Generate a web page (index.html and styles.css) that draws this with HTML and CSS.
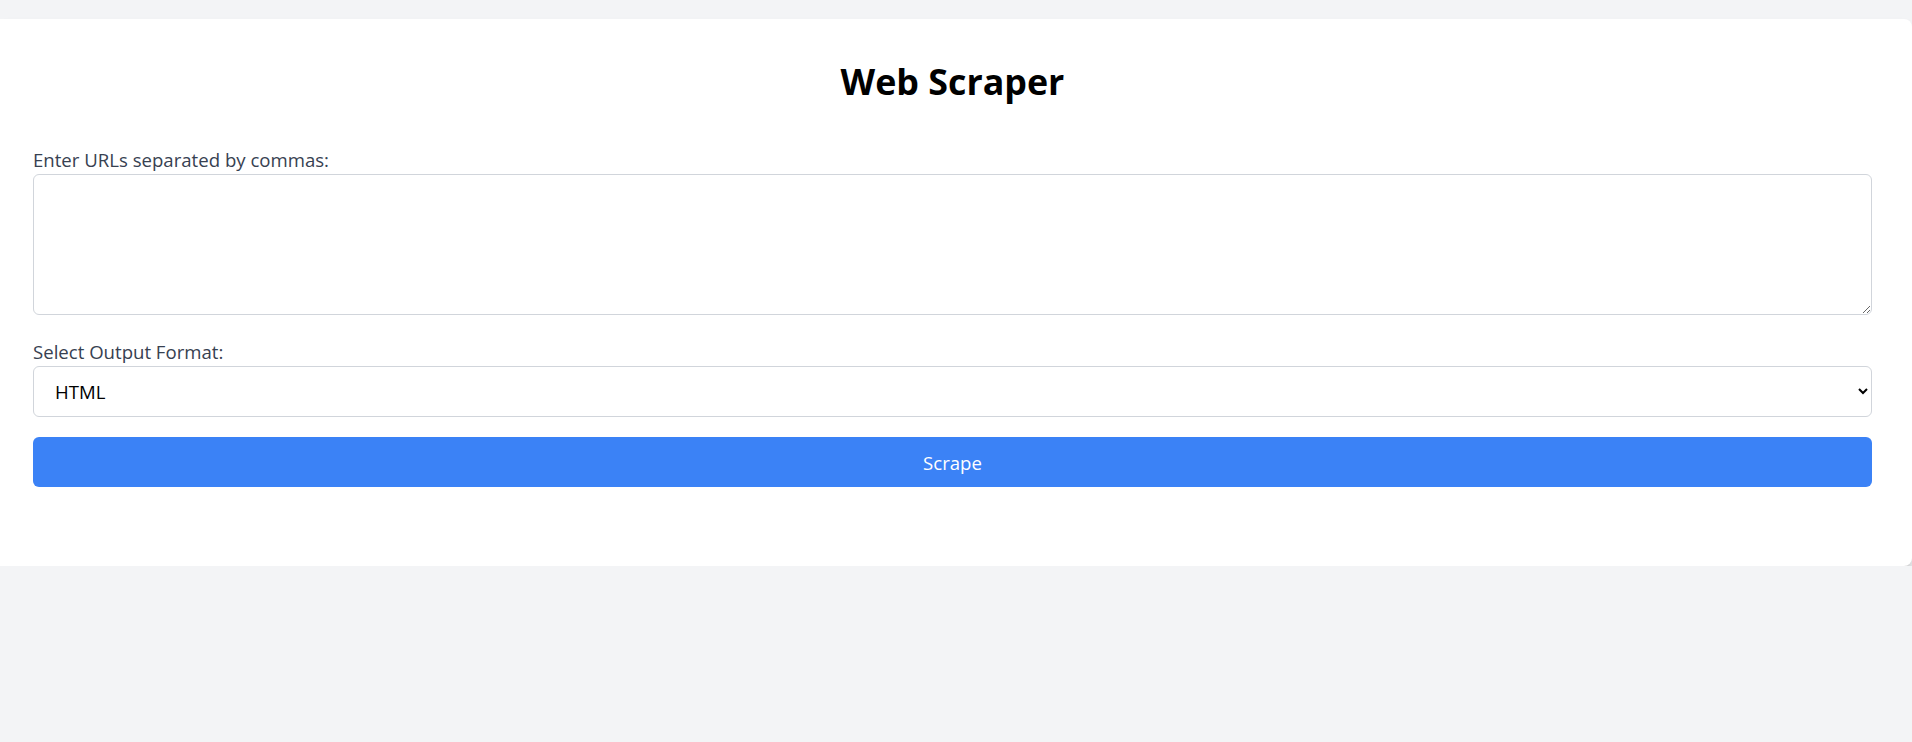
FILE: index.html
```html
<!DOCTYPE html>
<html lang="en">
<head>
<meta charset="utf-8">
<title>Web Scraper</title>
<link rel="stylesheet" href="styles.css">
</head>
<body>
<main class="card">
  <h1 class="title">Web Scraper</h1>
  <form class="form">
    <label class="label" for="urls">Enter URLs separated by commas:</label>
    <textarea id="urls" class="textarea"></textarea>
    <label class="label label-select" for="format">Select Output Format:</label>
    <select id="format" class="select">
      <option>HTML</option>
      <option>JSON</option>
      <option>CSV</option>
    </select>
    <button type="button" class="button">Scrape</button>
  </form>
</main>
</body>
</html>
```
FILE: styles.css
```css
html, body {
  margin: 0;
  padding: 0;
}
html {
  background: #f3f4f6;
}
body {
  font-family: "Open Sans", "Noto Sans", "Liberation Sans", sans-serif;
  padding-top: 19px;
}
.card {
  position: relative;
  box-sizing: border-box;
  width: 100%;
  background: #ffffff;
  border-radius: 0 8px 8px 0;
  padding: 40px 40px 79px 33px;
  box-shadow: 0 12px 18px -3px rgba(0, 0, 0, 0.18), 0 5px 8px -4px rgba(0, 0, 0, 0.16);
}
.card::after {
  content: "";
  position: absolute;
  left: 0;
  right: 6px;
  top: 100%;
  height: 22px;
  background: linear-gradient(to bottom, rgba(0, 0, 0, 0.09), rgba(0, 0, 0, 0.04) 40%, rgba(0, 0, 0, 0));
  border-radius: 0 0 12px 0;
  pointer-events: none;
}
.title {
  margin: 0 0 41px 0;
  text-align: center;
  font-size: 35.8px;
  line-height: 45px;
  font-weight: 700;
  color: #000;
}
.form {
  display: flex;
  flex-direction: column;
}
.label {
  display: block;
  font-size: 18.6px;
  line-height: 29px;
  color: #374151;
}
.label-select {
  margin-top: 22px;
}
.textarea {
  box-sizing: border-box;
  display: block;
  width: 100%;
  height: 141px;
  margin: 0;
  border: 1px solid #d1d5db;
  border-radius: 6px;
  padding: 10px;
  font-family: inherit;
  font-size: 18.6px;
  background: #fff;
}
.select {
  box-sizing: border-box;
  display: block;
  width: 100%;
  height: 51px;
  margin: 0;
  border: 1px solid #d1d5db;
  border-radius: 6px;
  padding: 0 14px 0 17px;
  font-family: inherit;
  font-size: 18.6px;
  color: #000;
  background: #fff;
}
.button {
  box-sizing: border-box;
  display: block;
  width: 100%;
  height: 50px;
  margin-top: 20px;
  border: 0;
  border-radius: 6px;
  background: #3b82f6;
  color: #fff;
  font-family: inherit;
  font-size: 18.6px;
  cursor: pointer;
}
```
